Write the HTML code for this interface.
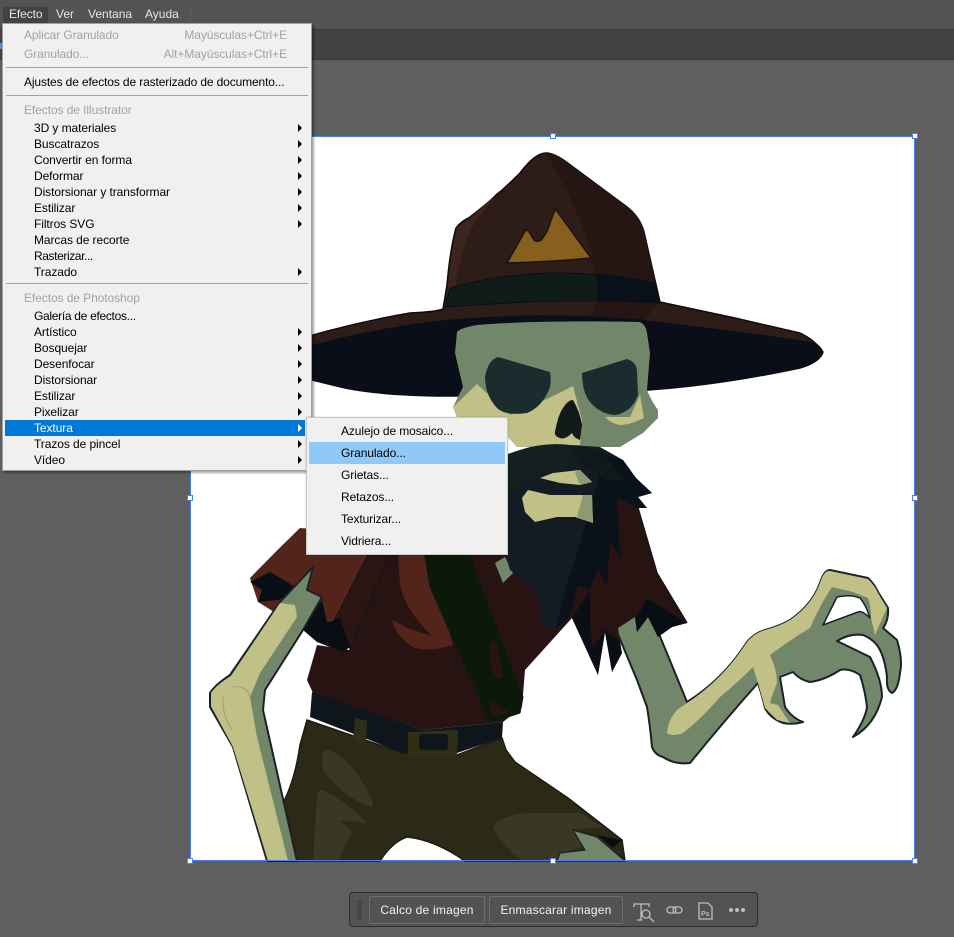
<!DOCTYPE html>
<html lang="es"><head><meta charset="utf-8"><title>Efecto</title>
<style>
html,body{margin:0;padding:0;background:#5f5f5f}
#p{position:relative;width:954px;height:937px;overflow:hidden;background:#5f5f5f;font:12px/16px "Liberation Sans",sans-serif;color:#000}
#p div,#p span{position:absolute;white-space:nowrap}
.bar{left:0;top:0;width:954px;height:30px;background:#535353;border-bottom:1px solid #3a3a3a;box-sizing:border-box}
.bar2{left:0;top:30px;width:954px;height:30px;background:#424242;border-bottom:1px solid #383838;box-sizing:border-box}
.mb{top:6px;color:#e6e6e6}
#m{left:2px;top:23px;width:310px;height:448px;background:#f0f0f0;border:1px solid #a0a0a0;box-sizing:border-box;box-shadow:2px 2px 2px rgba(0,0,0,.35)}
#m span{line-height:16px;letter-spacing:-.08px}
.d{color:#a2a2a2}
.sep{left:3px;width:302px;height:1px;background:#a0a0a0}
.a{left:295px;width:0;height:0;border-left:4px solid #000;border-top:4px solid transparent;border-bottom:4px solid transparent}
#s{left:306px;top:417px;width:202px;height:138px;background:#f0f0f0;border:1px solid #c8c8c8;box-sizing:border-box;box-shadow:0 0 2px rgba(0,0,0,.2)}
#s span{left:34px;line-height:16px;letter-spacing:-.1px}
#t{left:349px;top:892px;width:409px;height:35px;background:#535353;border:1px solid #2e2e2e;border-radius:4px;box-sizing:border-box}
.b{top:3px;height:28px;border:1px solid #6e6e6e;border-radius:2px;box-sizing:border-box;color:#f2f2f2;line-height:26px;text-align:center;font-size:12px;letter-spacing:.22px}
</style></head><body><div id="p">
<div class="bar"></div><div class="bar2"></div>
<div style="left:0;top:43px;width:2px;height:6px;background:#4a8fe0"></div>
<div style="left:3px;top:7px;width:45px;height:16px;background:#424242"></div>
<div style="left:190px;top:5px;width:1px;height:24px;background:#606060"></div>
<span class="mb" style="left:9px;letter-spacing:-.1px">Efecto</span>
<span class="mb" style="left:56px">Ver</span>
<span class="mb" style="left:88px">Ventana</span>
<span class="mb" style="left:145px">Ayuda</span>

<svg style="position:absolute;left:0;top:0" width="954" height="937" viewBox="0 0 954 937">
<rect x="190" y="136" width="725" height="725" fill="#fff"/>
<g stroke-linejoin="round">
<!-- pants -->
<path d="M307 720L403 753L457 755L502 738L506 750L515 762L568 798L622 840L625 861L465 861Q435 840 407 837Q392 842 380 861L297 861L283 803Q295 780 300 745Z" fill="#2c2a16" stroke="#1d1c10" stroke-width="1.5"/>
<path d="M322 757Q322 750 330 750Q352 762 362 782Q372 797 373 807Q345 800 323 770ZM317 797Q318 790 323 790Q347 802 367 823L340 820L353 833Q342 848 340 861L313 861ZM493 827Q500 815 530 813L580 813L603 827L573 830L583 847L560 853L557 861L523 861Q498 842 493 827Z" fill="#3a3824"/>
<path d="M573 830L597 837L625 861L557 861L560 853L585 850Z" fill="#72866a" stroke="#1b2226" stroke-width="1.2"/>
<path d="M597 835L622 840L613 848Z" fill="#080e14"/>
<!-- right arm & hand -->
<path d="M612 620L650 612L687 702Q722 680 745 645Q752 634 765 630Q780 626 790 620Q812 605 820 583Q824 570 830 570L868 578Q875 585 878 592L888 608Q889 620 883 628L897 640Q903 660 900 673Q898 690 892 693Q886 690 887 677Q885 660 880 650Q875 640 863 635Q850 633 837 641L870 657Q882 680 882 697Q875 725 853 737Q865 720 867 707Q865 690 860 675Q850 668 840 670Q825 680 810 682Q800 680 793 672L780 677Q783 695 785 707Q792 718 803 722Q793 725 783 723Q770 718 765 708Q762 695 758 683Q725 720 690 763Q675 765 663 757Q655 755 652 747Q650 725 647 707L637 680Z" fill="#72866a" stroke="#1b2226" stroke-width="2"/>
<path d="M823 625L837 597Q850 594 860 598Q866 605 870 618Q862 610 858 612Z" fill="#fff" stroke="#1b2226" stroke-width="1.5"/>
<path d="M830 571L868 579Q875 586 878 593L887 608L875 635L871 618Q871 606 868 598L853 592L832 587Q820 605 810 628Q790 640 770 655Q777 670 777 683Q772 695 770 703L778 705Q785 716 790 723L777 720L765 708L758 683L753 667Q735 685 720 697Q700 720 683 733Q672 737 667 733Q668 720 677 710L687 703Q722 680 745 645Q752 634 765 630Q780 626 790 620Q812 605 820 583Q824 570 830 571Z" fill="#c0c087"/>
<!-- shirt -->
<path d="M385 540L470 550L520 530L617 497L638 508L657 573L687 623L672 627L658 637L648 617L637 632L635 617L618 628L622 653L612 672L605 632L598 675L572 618L525 670L522 707L503 722L423 730L313 693L307 680L317 645L350 650L367 553Z" fill="#271412"/>
<path d="M572 618L590 590L590 625L593 647L605 630L618 640L622 653L612 672L605 632L598 675Z" fill="#090f15"/>
<path d="M647 598L663 608L687 623L672 627L658 637L648 617L637 632L635 617L640 612Z" fill="#080e14"/>
<path d="M617 497L638 508L657 573L687 623" fill="none" stroke="#141518" stroke-width="1.5"/>
<path d="M250 578Q275 552 300 528L395 535L367 553L333 620L327 622L303 630L258 602Z" fill="#53241a"/>
<path d="M367 553L390 555L350 650L333 620Z" fill="#2a1512"/>
<path d="M390 555L350 650" stroke="#121418" stroke-width="1.5" fill="none"/>
<path d="M250 582L270 572L287 582L300 590L278 600L258 602L262 590Z" fill="#080e14"/>
<path d="M322 600L327 622L340 618L350 647L343 652L317 642L303 630Z" fill="#080e14"/>
<path d="M397 540L423 540L453 645Q430 652 415 648Q398 640 392 620L410 629L432 636Q405 610 400 585Z" fill="#53241a"/>
<path d="M422 540L470 555L523 697L520 713L490 723L430 587Z" fill="#0c1808" stroke="#121a1a" stroke-width="1"/>
<path d="M491 642Q497 640 498 645L503 677Q498 680 494 677Q488 660 491 642ZM490 700L510 712L492 718Z" fill="#271412"/>
<path d="M312 692L310 717L403 753L457 753L502 738L503 722L423 730Z" fill="#0e161c"/>
<path d="M355 718L367 721L366 745L353 740Z" fill="#2f2f18"/>
<path d="M408 732L458 730L457 755Q433 761 408 755Z" fill="#2f2f18"/>
<rect x="419" y="734" width="29" height="16" rx="3" fill="#0e161c"/>
<path d="M495 563L505 557L513 573L503 583Z" fill="#72866a"/>
<!-- left arm -->
<path d="M313 567L307 590L322 597L303 630L265 690L263 710L297 861L267 861L233 747L210 707L210 693Q215 685 230 675L280 602Z" fill="#72866a" stroke="#1b2226" stroke-width="2"/>
<path d="M280 603Q288 604 295 605L297 617L260 673L250 697L257 737L288 861L268 861L233 747L211 706L211 693Q216 685 231 676Z" fill="#c0c087"/>
<path d="M223 697Q222 715 232 730M233 687Q247 685 250 697" fill="none" stroke="#9fa070" stroke-width="1"/>
<!-- hat -->
<path d="M270 348Q340 325 410 313Q435 312 443 309L447 285Q450 250 456 228Q460 222 470 217Q495 198 520 173Q535 153 546 153Q555 153 569 164L627 207Q640 217 644 232L660 302L735 318L800 333Q815 340 823 352Q820 362 800 368Q720 385 648 390L540 396L438 396Q380 395 345 388L312 380L270 365Z" fill="#2e1c18" stroke="#0f0d0e" stroke-width="1.5"/>
<path d="M569 164L627 207Q640 217 644 232L659 301L597 300L592 255Q580 210 546 154Q558 153 569 164Z" fill="#251613"/>
<path d="M448 287Q451 250 457 228L470 218Q485 205 500 190Q475 220 468 235Q458 265 455 288L446 306Z" fill="#3c251e"/>
<path d="M660 303L597 302L589 319L644 320Z" fill="#251613"/>
<path d="M312 345Q400 322 472 318Q550 312 644 320Q730 330 813 342Q822 346 823 352Q820 362 800 368Q720 385 648 390L540 396L438 396Q380 395 345 388L312 380L270 365L270 352Z" fill="#090e18"/>
<path d="M445 307L450 288Q500 274 551 273Q610 273 655 283L660 303Q600 300 551 301Q500 303 445 307Z" fill="#101c1a" stroke="#0b0f12" stroke-width="1"/>
<path d="M597 274Q630 276 655 283L660 303L597 301Z" fill="#08111a"/>
<path d="M507 263L524 233Q526 228 529 232L534 240Q538 243 542 239Q548 232 551 220L555.5 209L591 258Q550 262 507 263Z" fill="#86601c" stroke="#1a1210" stroke-width="1.5"/>
<!-- skull -->
<path d="M457 332Q460 328 477 325Q540 320 640 322Q646 325 647 333L650 353L647 390Q652 402 658 410L658 418L643 433L620 447L517 447L508 437L457 417L453 407L463 387L455 353Z" fill="#72866a"/>
<path d="M477 384L453 407L458 420L508 437L517 447L580 445L582 420L573 386L545 400L510 415Z" fill="#c0c087"/>
<path d="M640 395L644 418Q630 425 620 425Q610 423 605 417L630 417Z" fill="#c0c087"/>
<path d="M498 357L550 372Q552 385 548 392Q540 408 527 413Q505 416 497 408Q485 395 485 377Q488 360 498 357Z" fill="#1a2c2e"/>
<path d="M582 373L627 359Q636 362 637 370L638 395Q632 412 615 415Q600 414 590 402Q582 392 582 373Z" fill="#1a2c2e"/>
<path d="M573 400Q580 412 582 425L580 440Q574 438 572 433Q565 440 560 438Q554 436 555 432Q558 415 563 408Q568 400 573 400Z" fill="#121a1a"/>
<!-- beard -->
<path d="M505 455L520 450Q545 442 570 445L600 447L623 460L636 478L652 493L638 497L647 508L637 508L617 497L620 557L610 540L607 587L598 568L590 590L578 585L570 617L553 630L542 625L540 600L527 583L510 570L505 553Z" fill="#121c22"/>
<path d="M605 455L623 460L636 478L652 493L638 497L647 508L637 508L617 497L620 557L610 540L607 587L598 568L590 590L578 585L570 617L556 628L565 590L575 560L590 510Z" fill="#0a1118"/>
<path d="M505 455L520 450Q545 442 568 446L570 470L540 472L515 490L505 495Z" fill="#141f1f"/>
<path d="M570 446Q590 446 605 455L625 480L605 480L580 463Z" fill="#11181c"/>
<path d="M540 478L553 473L580 470L592 482L580 485L560 483Z" fill="#c0c087"/>
<path d="M580 470L592 482L580 485L575 472Z" fill="#8d9a74"/>
<path d="M522 498L528 490L550 495L592 495L593 523L575 517L557 517L535 522L525 512Z" fill="#c0c087"/>
<path d="M583 495L592 495L593 523L577 517Z" fill="#8d9a74"/>
</g>
<!-- selection -->
<rect x="190.5" y="136.5" width="724" height="724" fill="none" stroke="#4a7ef0" stroke-width="1"/>
<g fill="#fff" stroke="#4a7ef0" stroke-width="1">
<rect x="550.5" y="133.5" width="5" height="5"/><rect x="912.5" y="133.5" width="5" height="5"/>
<rect x="912.5" y="495.5" width="5" height="5"/><rect x="187.5" y="495.5" width="5" height="5"/>
<rect x="187.5" y="858.5" width="5" height="5"/><rect x="550.5" y="858.5" width="5" height="5"/><rect x="912.5" y="858.5" width="5" height="5"/>
</g>
</svg>

<div id="m">
<span class="d" style="left:21px;top:3px">Aplicar Granulado</span>
<span class="d" style="right:24px;top:3px">Mayúsculas+Ctrl+E</span>
<span class="d" style="left:21px;top:22px">Granulado...</span>
<span class="d" style="right:24px;top:22px">Alt+Mayúsculas+Ctrl+E</span>
<div class="sep" style="top:43px"></div>
<span style="left:21px;top:50px;letter-spacing:-.13px">Ajustes de efectos de rasterizado de documento...</span>
<div class="sep" style="top:71px"></div>
<span class="d" style="left:21px;top:78px">Efectos de Illustrator</span>
<span style="left:31px;top:96px">3D y materiales</span><div class="a" style="top:100px"></div>
<span style="left:31px;top:112px">Buscatrazos</span><div class="a" style="top:116px"></div>
<span style="left:31px;top:128px">Convertir en forma</span><div class="a" style="top:132px"></div>
<span style="left:31px;top:144px">Deformar</span><div class="a" style="top:148px"></div>
<span style="left:31px;top:160px">Distorsionar y transformar</span><div class="a" style="top:164px"></div>
<span style="left:31px;top:176px">Estilizar</span><div class="a" style="top:180px"></div>
<span style="left:31px;top:192px">Filtros SVG</span><div class="a" style="top:196px"></div>
<span style="left:31px;top:208px">Marcas de recorte</span>
<span style="left:31px;top:224px;letter-spacing:-.4px">Rasterizar...</span>
<span style="left:31px;top:240px">Trazado</span><div class="a" style="top:244px"></div>
<div class="sep" style="top:259px"></div>
<span class="d" style="left:21px;top:266px">Efectos de Photoshop</span>
<span style="left:31px;top:284px;letter-spacing:-.3px">Galería de efectos...</span>
<span style="left:31px;top:300px">Artístico</span><div class="a" style="top:304px"></div>
<span style="left:31px;top:316px">Bosquejar</span><div class="a" style="top:320px"></div>
<span style="left:31px;top:332px">Desenfocar</span><div class="a" style="top:336px"></div>
<span style="left:31px;top:348px">Distorsionar</span><div class="a" style="top:352px"></div>
<span style="left:31px;top:364px">Estilizar</span><div class="a" style="top:368px"></div>
<span style="left:31px;top:380px">Pixelizar</span><div class="a" style="top:384px"></div>
<div style="left:2px;top:396px;width:300px;height:16px;background:#0078d7"></div>
<span style="left:31px;top:396px;color:#fff">Textura</span><div class="a" style="top:400px;border-left-color:#fff"></div>
<span style="left:31px;top:412px">Trazos de pincel</span><div class="a" style="top:416px"></div>
<span style="left:31px;top:428px">Vídeo</span><div class="a" style="top:432px"></div>
</div>

<div id="s">
<div style="left:2px;top:24px;width:196px;height:22px;background:#90c8f6"></div>
<span style="top:5px">Azulejo de mosaico...</span>
<span style="top:27px">Granulado...</span>
<span style="top:49px">Grietas...</span>
<span style="top:71px">Retazos...</span>
<span style="top:93px">Texturizar...</span>
<span style="top:115px">Vidriera...</span>
</div>

<div id="t">
<div style="left:7px;top:7px;width:5px;height:20px;background:repeating-linear-gradient(#3c3c3c 0 1px,#535353 1px 2px)"></div>
<div class="b" style="left:19px;width:116px">Calco de imagen</div>
<div class="b" style="left:139px;width:134px">Enmascarar imagen</div>
<svg style="position:absolute;left:0;top:0" width="407" height="33" viewBox="0 0 407 33">
<g fill="none" stroke="#bdbdbd" stroke-width="1.3">
<path d="M284 14V11H299V14M291 11V27M287 27H292"/>
<circle cx="296" cy="21" r="4"/><path d="M299 24L304 29"/>
<rect x="317" y="14" width="9" height="6" rx="3"/><rect x="323" y="14" width="9" height="6" rx="3"/>
<path d="M349 10H358L362 14V26H349Z"/>
</g>
<text x="351" y="23" font-family="Liberation Sans, sans-serif" font-size="7" font-weight="bold" fill="#bdbdbd">Ps</text>
<g fill="#bdbdbd"><circle cx="381" cy="17" r="2"/><circle cx="387" cy="17" r="2"/><circle cx="393" cy="17" r="2"/></g>
</svg>
</div>
</div></body></html>
